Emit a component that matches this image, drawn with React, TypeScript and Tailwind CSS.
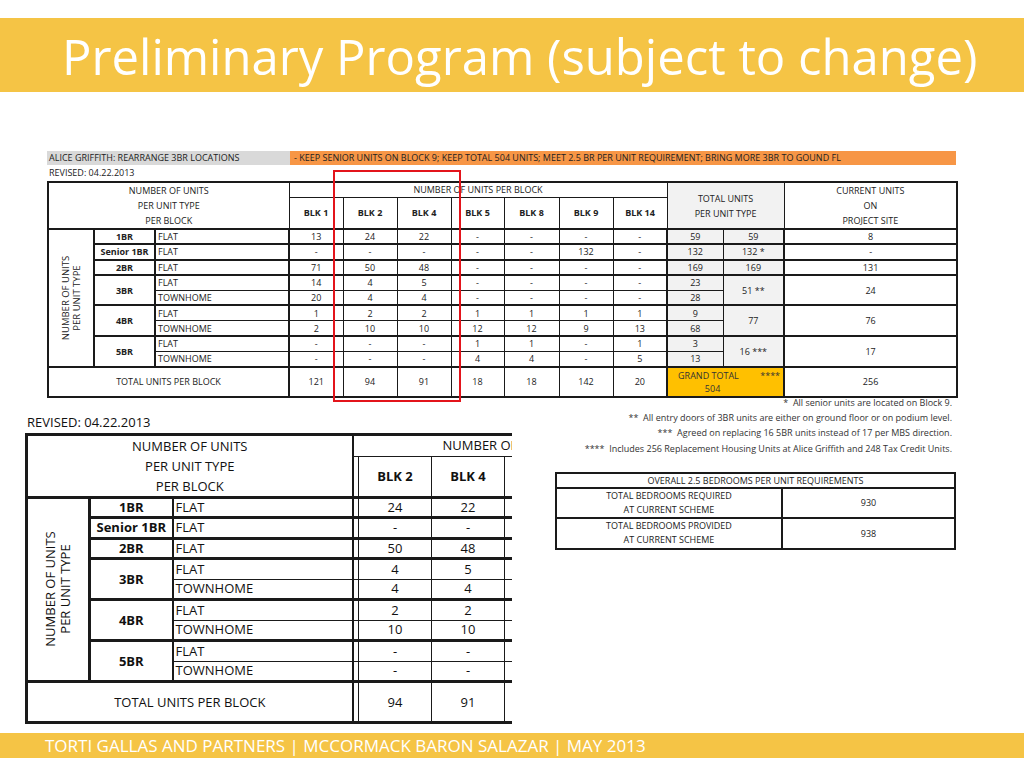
import React from "react";

type Row = {
  type?: string;
  span?: number;
  kind: string;
  vals: string[];
  t1: string;
  t2?: string;
  t2span?: number;
  cur?: string;
  group?: boolean;
};

const rows: Row[] = [
  { type: "1BR", span: 1, kind: "FLAT", vals: ["13", "24", "22", "-", "-", "-", "-"], t1: "59", t2: "59", t2span: 1, cur: "8", group: true },
  { type: "Senior 1BR", span: 1, kind: "FLAT", vals: ["-", "-", "-", "-", "-", "132", "-"], t1: "132", t2: "132 *", t2span: 1, cur: "-", group: true },
  { type: "2BR", span: 1, kind: "FLAT", vals: ["71", "50", "48", "-", "-", "-", "-"], t1: "169", t2: "169", t2span: 1, cur: "131", group: true },
  { type: "3BR", span: 2, kind: "FLAT", vals: ["14", "4", "5", "-", "-", "-", "-"], t1: "23", t2: "51 **", t2span: 2, cur: "24", group: true },
  { kind: "TOWNHOME", vals: ["20", "4", "4", "-", "-", "-", "-"], t1: "28" },
  { type: "4BR", span: 2, kind: "FLAT", vals: ["1", "2", "2", "1", "1", "1", "1"], t1: "9", t2: "77", t2span: 2, cur: "76", group: true },
  { kind: "TOWNHOME", vals: ["2", "10", "10", "12", "12", "9", "13"], t1: "68" },
  { type: "5BR", span: 2, kind: "FLAT", vals: ["-", "-", "-", "1", "1", "-", "1"], t1: "3", t2: "16 ***", t2span: 2, cur: "17", group: true },
  { kind: "TOWNHOME", vals: ["-", "-", "-", "4", "4", "-", "5"], t1: "13" },
];

const blocks = ["BLK 1", "BLK 2", "BLK 4", "BLK 5", "BLK 8", "BLK 9", "BLK 14"];
const blockTotals = ["121", "94", "91", "18", "18", "142", "20"];

const cell = "border border-[#1a1a1a] p-0 text-center align-middle";

function ProgramTable() {
  return (
    <table className="table-fixed border-collapse border-2 border-[#1a1a1a] text-[9px] leading-none text-[#222] w-[909px]">
      <colgroup>
        <col className="w-[46px]" />
        <col className="w-[61px]" />
        <col className="w-[134px]" />
        <col className="w-[54px]" />
        <col className="w-[54px]" />
        <col className="w-[54px]" />
        <col className="w-[53px]" />
        <col className="w-[55px]" />
        <col className="w-[54px]" />
        <col className="w-[54px]" />
        <col className="w-[56px]" />
        <col className="w-[61px]" />
        <col className="w-[173px]" />
      </colgroup>
      <tbody>
        <tr className="h-[15px]">
          <td colSpan={3} rowSpan={2} className={`${cell} border-b-2 leading-[15px]`}>
            NUMBER OF UNITS
            <br />
            PER UNIT TYPE
            <br />
            PER BLOCK
          </td>
          <td colSpan={7} className={cell}>
            NUMBER OF UNITS PER BLOCK
          </td>
          <td colSpan={2} rowSpan={2} className={`${cell} border-b-2 bg-[#f2f2f2] leading-[15px]`}>
            TOTAL UNITS
            <br />
            PER UNIT TYPE
          </td>
          <td rowSpan={2} className={`${cell} border-b-2 leading-[15px]`}>
            CURRENT UNITS
            <br />
            ON
            <br />
            PROJECT SITE
          </td>
        </tr>
        <tr className="h-[32px]">
          {blocks.map((b) => (
            <td key={b} className={`${cell} border-b-2 font-bold`}>
              {b}
            </td>
          ))}
        </tr>
        {rows.map((r, i) => (
          <tr key={i} className={`h-[15.3px] ${r.group ? "[&>td]:border-t-2" : ""}`}>
            {i === 0 && (
              <td rowSpan={9} className={`${cell} border-r-2`}>
                <div className="mx-auto w-[30px] h-[100px] flex items-center justify-center">
                  <div className="-rotate-90 whitespace-nowrap leading-[11px] text-[9.5px] text-center">
                    NUMBER OF UNITS
                    <br />
                    PER UNIT TYPE
                  </div>
                </div>
              </td>
            )}
            {r.type && (
              <td rowSpan={r.span} className={`${cell} font-bold`}>
                {r.type}
              </td>
            )}
            <td className={`${cell} border-l-2 text-left pl-[2px]`}>{r.kind}</td>
            {r.vals.map((v, j) => (
              <td key={j} className={`${cell} ${j === 0 ? "border-l-2" : ""}`}>
                {v}
              </td>
            ))}
            <td className={`${cell} border-l-2 bg-[#f2f2f2]`}>{r.t1}</td>
            {r.t2 && (
              <td rowSpan={r.t2span} className={`${cell} bg-[#f2f2f2]`}>
                {r.t2}
              </td>
            )}
            {r.cur && (
              <td rowSpan={r.t2span} className={`${cell} border-l-2`}>
                {r.cur}
              </td>
            )}
          </tr>
        ))}
        <tr className="h-[30px] [&>td]:border-t-2">
          <td colSpan={3} className={cell}>
            TOTAL UNITS PER BLOCK
          </td>
          {blockTotals.map((v, j) => (
            <td key={j} className={`${cell} ${j === 0 ? "border-l-2" : ""}`}>
              {v}
            </td>
          ))}
          <td colSpan={2} className={`${cell} border-l-2 bg-[#ffc000] text-[#333]`}>
            <div className="flex justify-between pl-[10px] pr-[3px] leading-[13px]">
              <span>GRAND TOTAL</span>
              <span>****</span>
            </div>
            <div className="pr-[26px] leading-[13px]">504</div>
          </td>
          <td className={`${cell} border-l-2`}>256</td>
        </tr>
      </tbody>
    </table>
  );
}

const bigCell = "border-[1.5px] border-[#1a1a1a] p-0 text-center align-middle";

function ZoomTable() {
  const big = blocks.slice(1);
  return (
    <div className="w-[487px] overflow-hidden">
      <table className="table-fixed border-collapse border-[3px] border-r-0 border-[#1a1a1a] text-[13px] leading-none text-[#111] w-[860px]">
        <colgroup>
          <col className="w-[63px]" />
          <col className="w-[83px]" />
          <col className="w-[180px]" />
          <col className="w-[6px]" />
          <col className="w-[73px]" />
          <col className="w-[73px]" />
          <col className="w-[73px]" />
          <col className="w-[73px]" />
          <col className="w-[73px]" />
          <col className="w-[73px]" />
          <col className="w-[90px]" />
        </colgroup>
        <tbody>
          <tr className="h-[21px]">
            <td colSpan={3} rowSpan={2} className={`${bigCell} border-b-[3px] border-r-2 leading-[20px]`}>
              NUMBER OF UNITS
              <br />
              PER UNIT TYPE
              <br />
              PER BLOCK
            </td>
            <td colSpan={8} className={`${bigCell} border-t-2 text-left pl-[89px]`}>
              NUMBER OF UNITS PER BLOCK
            </td>
          </tr>
          <tr className="h-[38px]">
            <td className={`${bigCell} border-b-[3px] border-l-2`} />
            {big.map((b) => (
              <td key={b} className={`${bigCell} border-b-[3px] font-bold`}>
                {b}
              </td>
            ))}
            <td className={`${bigCell} border-b-[3px]`} />
          </tr>
          {rows.map((r, i) => (
            <tr key={i} className={`h-[20.5px] ${r.group ? "[&>td]:border-t-[3px]" : ""}`}>
              {i === 0 && (
                <td rowSpan={9} className={`${bigCell} border-r-[3px]`}>
                  <div className="mx-auto w-[40px] h-[140px] flex items-center justify-center">
                    <div className="-rotate-90 whitespace-nowrap leading-[15px] text-center">
                      NUMBER OF UNITS
                      <br />
                      PER UNIT TYPE
                    </div>
                  </div>
                </td>
              )}
              {r.type && (
                <td rowSpan={r.span} className={`${bigCell} font-bold`}>
                  {r.type}
                </td>
              )}
              <td className={`${bigCell} border-l-2 border-r-2 text-left pl-[2px]`}>{r.kind}</td>
              <td className={`${bigCell} border-l-2`} />
              {r.vals.slice(1).map((v, j) => (
                <td key={j} className={bigCell}>
                  {v}
                </td>
              ))}
              <td className={bigCell}>{r.t1}</td>
            </tr>
          ))}
          <tr className="h-[41px] [&>td]:border-t-[3px] [&>td]:border-b-[3px]">
            <td colSpan={3} className={`${bigCell} border-r-2`}>
              TOTAL UNITS PER BLOCK
            </td>
            <td className={`${bigCell} border-l-2`} />
            {blockTotals.slice(1).map((v, j) => (
              <td key={j} className={bigCell}>
                {v}
              </td>
            ))}
            <td className={bigCell} />
          </tr>
        </tbody>
      </table>
    </div>
  );
}

export default function App() {
  return (
    <div className="w-[1024px] h-[768px] bg-white overflow-hidden font-['Open_Sans',sans-serif]">
      <div className="h-[18px]" />
      <div className="h-[74px] bg-[#f5c445] flex items-center pl-[62px]">
        <h1 className="text-white text-[49px] leading-none pt-[2px]">Preliminary Program (subject to change)</h1>
      </div>

      <div className="relative ml-[47px] mt-[59px] w-[909px]">
        <div className="flex h-[14px] text-[9px] leading-[14px] text-[#222]">
          <div className="w-[243px] bg-[#d9d9d9] pl-[2px]">ALICE GRIFFITH: REARRANGE 3BR LOCATIONS</div>
          <div className="flex-1 bg-[#f79646] pl-[4px]">
            - KEEP SENIOR UNITS ON BLOCK 9; KEEP TOTAL 504 UNITS; MEET 2.5 BR PER UNIT REQUIREMENT; BRING MORE 3BR TO GOUND FL
          </div>
        </div>
        <div className="h-[16px] text-[9px] leading-[16px] text-[#222] pl-[2px]">REVISED: 04.22.2013</div>
        <ProgramTable />
        <div className="absolute left-[286px] top-[19px] w-[128px] h-[232px] border-2 border-[#e3141b]" />
      </div>

      <div className="flex">
        <div className="ml-[25px] pt-[14px]">
          <div className="text-[13px] leading-[21px] text-[#111] pl-[2px]">REVISED: 04.22.2013</div>
          <ZoomTable />
        </div>
        <div className="flex-1 flex flex-col items-end pr-[68px]">
          <div className="-mt-[3px] mr-[4px] text-[9px] leading-[15.3px] text-[#333] text-right">
            <div>*&nbsp; All senior units are located on Block 9.</div>
            <div>**&nbsp; All entry doors of 3BR units are either on ground floor or on podium level.</div>
            <div>***&nbsp; Agreed on replacing 16 5BR units instead of 17 per MBS direction.</div>
            <div>****&nbsp; Includes 256 Replacement Housing Units at Alice Griffith and 248 Tax Credit Units.</div>
          </div>
          <table className="mt-[16px] table-fixed border-collapse border-2 border-[#1a1a1a] text-[9px] leading-none text-[#222] w-[399px]">
            <colgroup>
              <col className="w-[226px]" />
              <col className="w-[173px]" />
            </colgroup>
            <tbody>
              <tr className="h-[15px]">
                <td colSpan={2} className={`${cell} border-b-2`}>
                  OVERALL 2.5 BEDROOMS PER UNIT REQUIREMENTS
                </td>
              </tr>
              <tr className="h-[30px]">
                <td className={`${cell} border-r-2 leading-[14px]`}>
                  TOTAL BEDROOMS REQUIRED
                  <br />
                  AT CURRENT SCHEME
                </td>
                <td className={cell}>930</td>
              </tr>
              <tr className="h-[31px]">
                <td className={`${cell} border-t-2 border-r-2 leading-[14px]`}>
                  TOTAL BEDROOMS PROVIDED
                  <br />
                  AT CURRENT SCHEME
                </td>
                <td className={`${cell} border-t-2`}>938</td>
              </tr>
            </tbody>
          </table>
        </div>
      </div>

      <div className="mt-[9px] h-[25px] bg-[#f5c445] flex items-center pl-[45px]">
        <span className="text-white text-[17px] leading-none">
          TORTI GALLAS AND PARTNERS | MCCORMACK BARON SALAZAR | MAY 2013
        </span>
      </div>
    </div>
  );
}
